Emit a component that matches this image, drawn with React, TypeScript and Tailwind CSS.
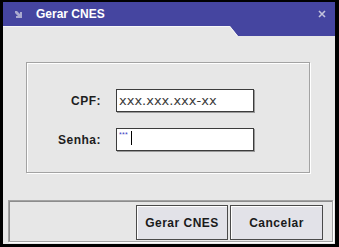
import React from "react";

export default function App() {
  const font = { fontFamily: '"Liberation Sans", Arial, sans-serif' };
  return (
    <div className="w-[339px] h-[247px] bg-black pl-[3px] pr-[4px] pt-[2px] pb-[3px]" style={font}>
      <div className="w-full h-full bg-[#e7e7e7] flex flex-col">
        {/* Title bar */}
        <div className="relative h-[34px] shrink-0">
          <svg className="absolute inset-0" width="332" height="34" viewBox="0 0 332 34">
            <polygon points="0,0 332,0 332,34 235,34 227,24 0,24" fill="#4545a0" />
            <polyline points="0,24.5 226.8,24.5 234.8,34.5" fill="none" stroke="#f7f7f7" strokeWidth="1" />
          </svg>
          <div className="relative h-[24px] flex items-center">
            <svg className="ml-[11px]" width="8" height="8" viewBox="0 0 8 8">
              <polygon points="1,1 3,1 6,4 6,2 8,2 8,8 2,8 2,6 4,6 1,3" fill="#a9a9cf" />
            </svg>
            <span className="ml-[14px] text-[12px] font-bold text-white leading-none">Gerar CNES</span>
            <svg className="ml-auto mr-[9px]" width="8" height="8" viewBox="0 0 8 8">
              <path d="M1 1 L7 7 M7 1 L1 7" stroke="#c3c3dc" strokeWidth="1.6" />
            </svg>
          </div>
        </div>

        {/* Group box */}
        <div className="ml-[23px] mt-[26px] w-[284px] h-[111px] shrink-0 border border-[#a3a3a3] shadow-[inset_1px_1px_0_#ffffff,1px_1px_0_#ffffff] pt-[26px]">
          <div className="grid grid-cols-[74px_138px] gap-x-[15px] gap-y-[16px] items-center">
            <div className="text-right text-[12px] font-bold tracking-[0.5px] text-[#1e1e1e]">CPF:</div>
            <div className="h-[23px] bg-white border border-[#3c3c3c] shadow-[1px_1px_0_#9a9a9a] flex items-center pl-[2px]">
              <span className="text-[13px] text-[#3a3a3a] leading-none" style={{ fontFamily: '"DejaVu Sans", Verdana, sans-serif' }}>
                xxx.xxx.xxx-xx
              </span>
            </div>
            <div className="text-right text-[12px] font-bold tracking-[0.5px] text-[#1e1e1e]">Senha:</div>
            <div className="h-[23px] bg-white border border-[#3c3c3c] shadow-[1px_1px_0_#9a9a9a] flex items-start pl-[2px] pt-[1px]">
              <span className="text-[7px] text-[#3b3bc0] leading-[9px] tracking-[0.3px]">***</span>
              <span className="ml-[3px] mt-[1px] w-[1px] h-[14px] bg-black" />
            </div>
          </div>
        </div>

        {/* Bottom panel */}
        <div className="ml-[5px] mr-[2px] mt-[27px] h-[42px] shrink-0 border border-[#a3a3a3] shadow-[inset_1px_1px_0_#8c8c8c,1px_1px_0_#ffffff] flex justify-end items-start pt-[4px] pr-[9px] gap-[2px]">
          <button className="w-[92px] h-[35px] bg-[#e2e2e8] border border-[#4a4a4a] shadow-[inset_1px_1px_0_#ffffff] text-[12px] font-bold tracking-[0.5px] text-[#1a1a1a]">
            Gerar CNES
          </button>
          <button className="w-[93px] h-[35px] bg-[#e2e2e8] border border-[#4a4a4a] shadow-[inset_1px_1px_0_#ffffff] text-[12px] font-bold tracking-[0.5px] text-[#1a1a1a]">
            Cancelar
          </button>
        </div>
      </div>
    </div>
  );
}
